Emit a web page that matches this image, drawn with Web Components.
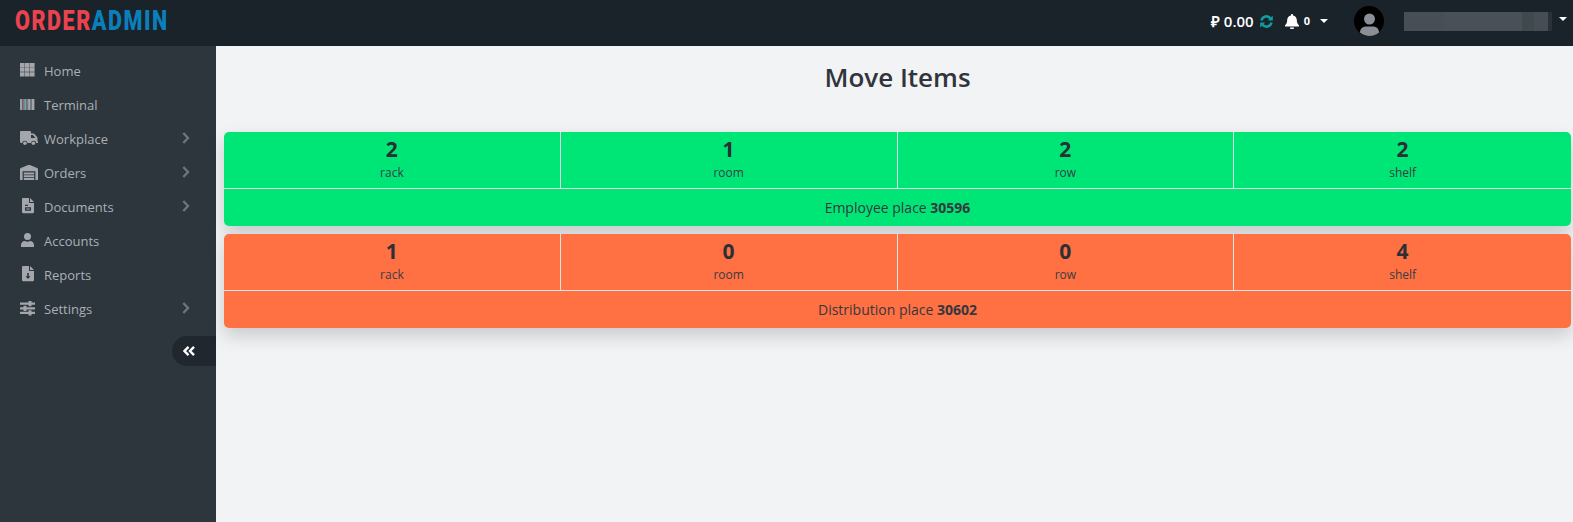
<!DOCTYPE html>
<html lang="en">
<head>
<meta charset="utf-8">
<title>Move Items</title>
<style>
  html, body { margin: 0; height: 100%; overflow: hidden; background: #f1f3f5; }
  body { font-family: "Open Sans", "Liberation Sans", sans-serif; color: #2b2f36; }
</style>
</head>
<body>
<oa-app>
  <oa-topbar slot="top"></oa-topbar>
  <oa-sidebar slot="side">
    <oa-nav-item icon="grid">Home</oa-nav-item>
    <oa-nav-item icon="barcode">Terminal</oa-nav-item>
    <oa-nav-item icon="truck" more>Workplace</oa-nav-item>
    <oa-nav-item icon="warehouse" more>Orders</oa-nav-item>
    <oa-nav-item icon="doc" more>Documents</oa-nav-item>
    <oa-nav-item icon="user">Accounts</oa-nav-item>
    <oa-nav-item icon="report">Reports</oa-nav-item>
    <oa-nav-item icon="sliders" more>Settings</oa-nav-item>
  </oa-sidebar>
  <oa-page-title>Move Items</oa-page-title>
  <oa-place-card color="#00e676">
    <oa-stat value="2">rack</oa-stat>
    <oa-stat value="1">room</oa-stat>
    <oa-stat value="2">row</oa-stat>
    <oa-stat value="2">shelf</oa-stat>
    <span slot="footer">Employee place <b>30596</b></span>
  </oa-place-card>
  <oa-place-card color="#ff7043">
    <oa-stat value="1">rack</oa-stat>
    <oa-stat value="0">room</oa-stat>
    <oa-stat value="0">row</oa-stat>
    <oa-stat value="4">shelf</oa-stat>
    <span slot="footer">Distribution place <b>30602</b></span>
  </oa-place-card>
</oa-app>

<script>
const ICONS = {
  grid: '<path d="M0 0h4.600v4.200H0zM5 0h4.600v4.200H5zM10 0h4.600v4.200H10zM0 4.600h4.600v4.200H0zM5 4.600h4.600v4.200H5zM10 4.600h4.600v4.200H10zM0 9.200h4.600v4.200H0zM5 9.200h4.600v4.200H5zM10 9.200h4.600v4.200H10z"/>',
  barcode: '<path d="M0 0h2v11H0z" fill="#8fa3a8"/><path d="M2.400 0h1.400v11H2.400z" fill="#b0797f"/><path d="M4.200 0h1.800v11H4.200zM6.400 0h1.300v11H6.400z" fill="#7ea0a6"/><path d="M8.100 0h1.900v11H8.100zM10.400 0h1.200v11h-1.200zM12 0h2.400v11H12z"/>',
  truck: '<path fill-rule="evenodd" d="M0 1.200C0 .5.500 0 1.200 0h8.600c.7 0 1.200.5 1.200 1.200V2.600h2.400c.4 0 .8.200 1.100.5l2.600 2.800c.2.300.4.600.4 1v3.300h.5V12h-1.700a2.700 2.700 0 0 0-5.300 0H7.500a2.700 2.700 0 0 0-5.300 0H1.200C.5 12 0 11.500 0 10.800zM11 4v3h4.400L12.800 4z"/><circle cx="4.900" cy="12.200" r="1.800"/><circle cx="13.400" cy="12.200" r="1.800"/>',
  warehouse: '<path d="M9 0c.3 0 .5 0 .8.100l7.400 2.900c.5.200.8.600.8 1.100V15h-2.600V6.300H2.600V15H0V4.100c0-.5.300-.9.800-1.100L8.200.1C8.500 0 8.700 0 9 0z"/><path d="M3.800 7.500h10.400v2H3.800zM3.800 10.200h10.400v2H3.800zM3.800 12.900h10.400V15H3.800z"/>',
  doc: '<path fill-rule="evenodd" d="M0 1.200C0 .5.500 0 1.200 0H7v4.200c0 .5.400.9.900.9H12v9c0 .6-.5 1.100-1.200 1.100H1.200C.5 15.200 0 14.700 0 14.100zM8 0l4 4H8zM3 6.800v1.300h3V6.800zM3 9.300v3.400h6V9.300zM4.300 10.500h3.400v1H4.300z"/>',
  user: '<circle cx="6.500" cy="3.500" r="3.500"/><path d="M0 14v-1.800C0 9.700 1.700 8 3.800 8c.8.500 1.700.8 2.700.8s1.900-.3 2.700-.8c2.100 0 3.800 1.700 3.800 4.200V14z"/>',
  report: '<path fill-rule="evenodd" d="M0 1.200C0 .5.500 0 1.200 0H7v4.200c0 .5.400.9.900.9H12v9c0 .6-.5 1.100-1.200 1.100H1.200C.5 15.200 0 14.700 0 14.100zM8 0l4 4H8zM5.200 7v3.200H3.500L6 13l2.500-2.800H6.800V7z"/>',
  sliders: '<path d="M0 1.500h8.500V0h3v1.500H15v2.200h-3.500v1.500h-3V3.700H0zM0 6.300h3.500V4.800h3v1.500H15v2.200H6.500V10h-3V8.500H0zM0 10.800h8.500V9.300h3v1.500H15V13h-3.500v1.500h-3V13H0z"/>'
};

// width, height, left nudge
const SIZES = {
  grid: [15, 14, 0], barcode: [15, 11, 0], truck: [18, 15, 0], warehouse: [18, 15, 0],
  doc: [12, 16, 1.500], user: [13, 14, 1], report: [12, 16, 1.500], sliders: [15, 15, 0]
};

class OaApp extends HTMLElement {
  constructor() {
    super();
    this.attachShadow({ mode: 'open' }).innerHTML = `
      <style>
        :host { display: flex; flex-direction: column; height: 522px; overflow: hidden; }
        .body { flex: 1; display: flex; min-height: 0; }
        main { flex: 1; min-width: 0; padding: 0 2px 0 8px; }
      </style>
      <slot name="top"></slot>
      <div class="body">
        <slot name="side"></slot>
        <main><slot></slot></main>
      </div>`;
  }
}

class OaTopbar extends HTMLElement {
  constructor() {
    super();
    this.attachShadow({ mode: 'open' }).innerHTML = `
      <style>
        :host { display: flex; align-items: center; height: 46px; padding-bottom: 4px; box-sizing: border-box; background: #1a222a; color: #fff; flex: none; }
        .logo { margin-left: 15px; font: 900 27px/42px "Roboto", "Liberation Sans", sans-serif; letter-spacing: 1.900px; transform: scaleX(.8); transform-origin: left center; color: #e8434f; white-space: nowrap; flex: 1; }
        .logo span { color: #0b7fba; }
        .balance { font-weight: 600; font-size: 15px; }
        .refresh { margin-left: 6px; display: block; }
        .bell { margin-left: 12px; display: block; }
        .count { font-size: 11px; font-weight: 700; margin: -2px 0 0 5px; }
        .caret { width: 0; height: 0; border: 4.500px solid transparent; border-top-color: #fff; border-bottom: 0; margin-left: 10px; }
        .avatar { margin-left: 26px; display: block; }
        .name { margin-left: 20px; width: 148px; height: 19px; background: linear-gradient(90deg, #474e55 0 27%, #4a5057 27% 80%, #3f4a4d 80% 88%, #474d54 88% 97%, #2a3138 97%); }
        .caret.end { margin: -5px 6px 0 7px; border-width: 4px; border-bottom: 0; }
      </style>
      <div class="logo">ORDER<span>ADMIN</span></div>
      <div class="balance">₽ 0.00</div>
      <svg class="refresh" width="13" height="13" viewBox="0 0 13 13" fill="none" stroke="#0f9d9f" stroke-width="2.600">
        <path d="M1.500 5.500A5 5 0 0 1 10.500 3.500"/><path d="M11.500 7.500A5 5 0 0 1 2.500 9.500"/>
        <path d="M12.800 .4v5H7.800z" fill="#0f9d9f" stroke="none"/><path d="M.2 12.600v-5h5z" fill="#0f9d9f" stroke="none"/>
      </svg>
      <svg class="bell" width="14" height="15" viewBox="0 0 14 15" fill="#fff">
        <path d="M7 0c.6 0 1 .4 1 1v.6c2.300.4 3.800 2.300 3.800 4.500 0 3.300 1.200 4.300 2.200 5.400v1H0v-1c1-1.100 2.200-2.100 2.200-5.400 0-2.200 1.500-4.100 3.800-4.500V1c0-.6.400-1 1-1z"/>
        <path d="M5 13.400h4a2 2 0 0 1-4 0z"/>
      </svg>
      <div class="count">0</div>
      <div class="caret"></div>
      <svg class="avatar" width="30" height="30" viewBox="0 0 30 30">
        <circle cx="15" cy="15" r="15" fill="#000"/>
        <circle cx="15.500" cy="13" r="5.500" fill="#8a9096"/>
        <path d="M6 26.500c0-4 3-6 6-6h7c3 0 6 2 6 6-2.500 2.300-6 3.500-9.500 3.500S8.500 28.800 6 26.500z" fill="#8a9096"/>
      </svg>
      <div class="name"></div>
      <div class="caret end"></div>`;
  }
}

class OaSidebar extends HTMLElement {
  constructor() {
    super();
    this.attachShadow({ mode: 'open' }).innerHTML = `
      <style>
        :host { display: flex; flex-direction: column; width: 216px; flex: none; background: #2d353d; padding-top: 8px; box-sizing: border-box; }
        .collapse { align-self: flex-end; width: 44px; height: 30px; margin-top: 10px; border-radius: 15px 0 0 15px; background: #20272e; display: flex; align-items: center; padding-left: 11px; box-sizing: border-box; }
      </style>
      <slot></slot>
      <div class="collapse">
        <svg width="12" height="10" viewBox="0 0 12 10" fill="none" stroke="#fff" stroke-width="2.400">
          <path d="M5.500 .9 1.500 5l4 4.100M11 .9 7 5l4 4.100"/>
        </svg>
      </div>`;
  }
}

class OaNavItem extends HTMLElement {
  connectedCallback() {
    const name = this.getAttribute('icon');
    const [w, h, dx] = SIZES[name];
    const chevron = this.hasAttribute('more')
      ? '<svg class="chev" width="8" height="12" viewBox="0 0 8 12" fill="none" stroke="#6e747a" stroke-width="2.400"><path d="M1.300 1 6 6l-4.700 5"/></svg>'
      : '';
    this.attachShadow({ mode: 'open' }).innerHTML = `
      <style>
        :host { display: flex; align-items: center; height: 34px; padding-left: 20px; color: #abb0b5; font-size: 13px; }
        .ico { width: 24px; flex: none; display: flex; margin-top: -2px; }
        .ico svg { display: block; fill: #a3a7ab; margin-left: ${dx}px; }
        .label { flex: 1; margin-top: -1px; }
        .chev { margin-right: 26px; display: block; margin-top: -2px; }
      </style>
      <span class="ico"><svg width="${w}" height="${h}" viewBox="0 0 ${w} ${h}">${ICONS[name]}</svg></span>
      <span class="label"><slot></slot></span>
      ${chevron}`;
  }
}

class OaPageTitle extends HTMLElement {
  constructor() {
    super();
    this.attachShadow({ mode: 'open' }).innerHTML = `
      <style>
        :host { display: block; height: 86px; padding-top: 13px; box-sizing: border-box; text-align: center; font-size: 26px; line-height: 36px; font-weight: 600; color: #31353b; }
      </style>
      <slot></slot>`;
  }
}

class OaPlaceCard extends HTMLElement {
  connectedCallback() {
    this.attachShadow({ mode: 'open' }).innerHTML = `
      <style>
        :host { display: block; margin-bottom: 8px; border-radius: 5px; background: ${this.getAttribute('color')}; box-shadow: 0 8px 18px rgba(0,0,0,.17); overflow: hidden; }
        .stats { display: grid; grid-template-columns: repeat(4, 1fr); height: 56px; }
        .foot { border-top: 1px solid #e4e6e8; height: 37px; text-align: center; font-size: 14px; line-height: 37px; color: #33383f; }
        ::slotted(oa-stat:not(:nth-child(4))) { border-right: 1px solid #e4e6e8; }
      </style>
      <div class="stats"><slot></slot></div>
      <div class="foot"><slot name="footer"></slot></div>`;
  }
}

class OaStat extends HTMLElement {
  connectedCallback() {
    this.attachShadow({ mode: 'open' }).innerHTML = `
      <style>
        :host { display: block; text-align: center; box-sizing: border-box; }
        .v { font-size: 21px; font-weight: 700; line-height: 27px; margin-top: 4px; }
        .l { font-size: 12px; line-height: 17px; margin-top: 1px; color: #383d44; }
      </style>
      <div class="v">${this.getAttribute('value')}</div>
      <div class="l"><slot></slot></div>`;
  }
}

customElements.define('oa-app', OaApp);
customElements.define('oa-topbar', OaTopbar);
customElements.define('oa-sidebar', OaSidebar);
customElements.define('oa-nav-item', OaNavItem);
customElements.define('oa-page-title', OaPageTitle);
customElements.define('oa-place-card', OaPlaceCard);
customElements.define('oa-stat', OaStat);
</script>
</body>
</html>
